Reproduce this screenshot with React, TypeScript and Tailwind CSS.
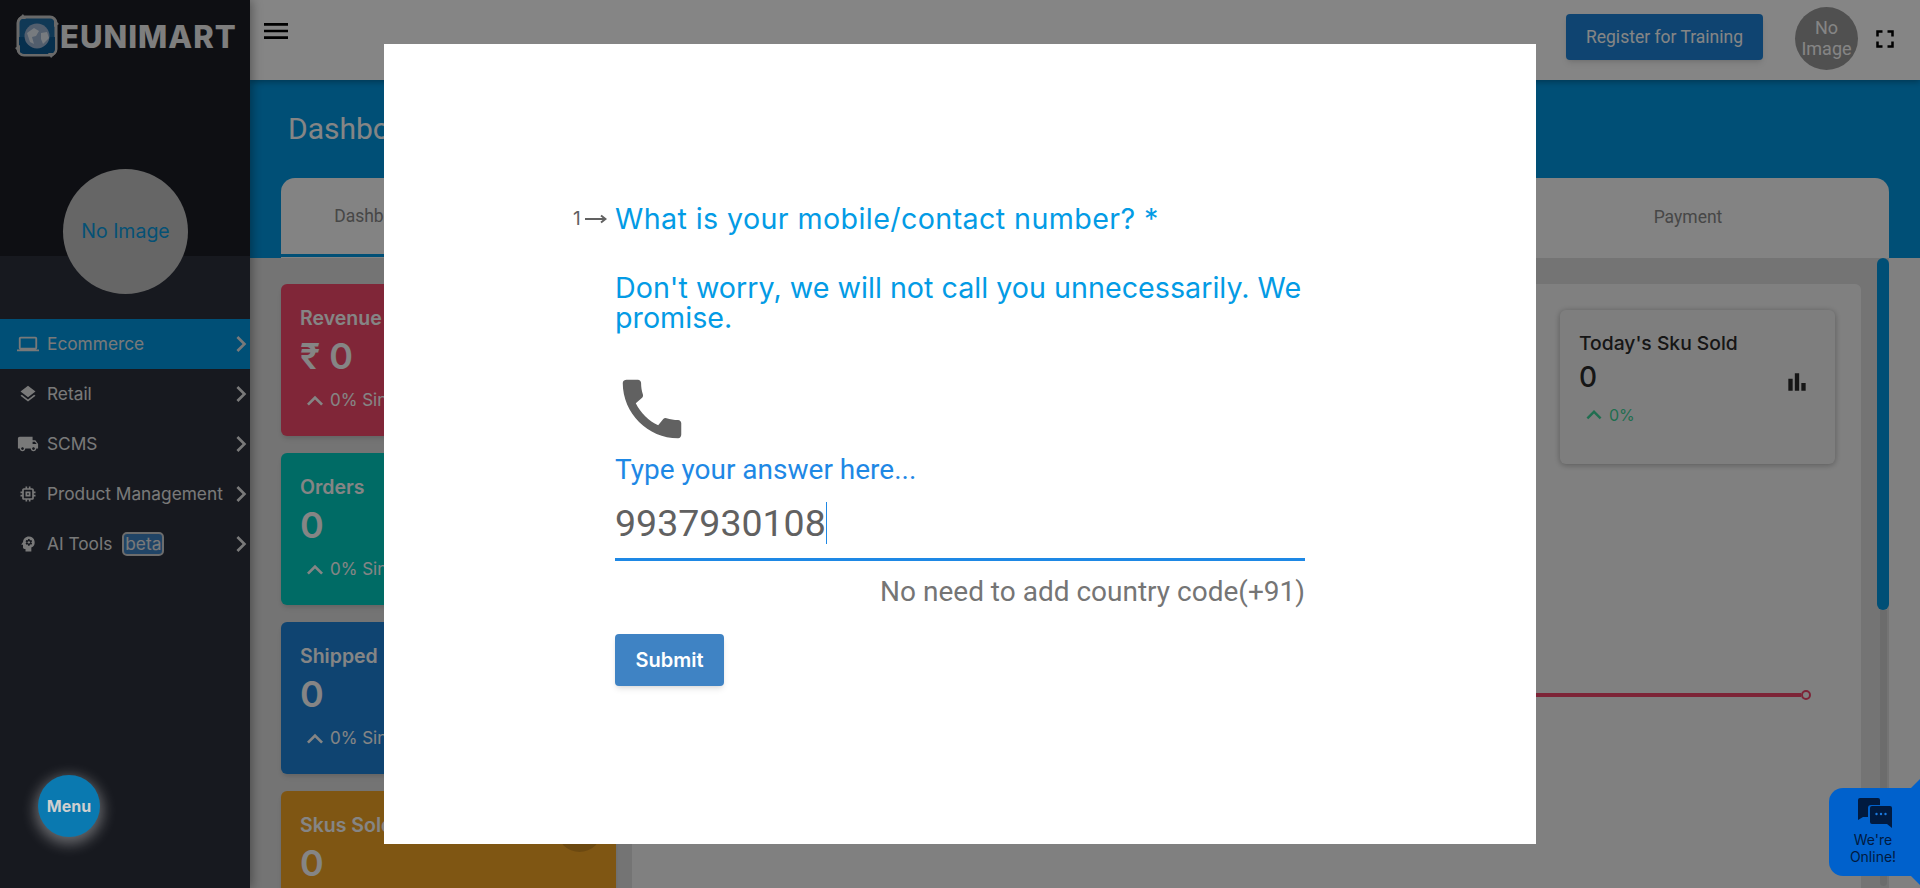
import type { ReactNode } from "react";
import {
  MdBarChart,
  MdCall,
  MdChevronRight,
  MdFullscreen,
  MdKeyboardArrowUp,
  MdLaptop,
  MdLayers,
  MdLocalShipping,
  MdMemory,
  MdMenu,
  MdPsychology,
} from "react-icons/md";

const rubik = "font-['Inter','Noto_Sans',sans-serif]";
const roboto = "font-['Roboto',sans-serif]";

const menuItems: { label: string; icon: ReactNode; active?: boolean; beta?: boolean }[] = [
  { label: "Ecommerce", icon: <MdLaptop size={22} />, active: true },
  { label: "Retail", icon: <MdLayers size={20} /> },
  { label: "SCMS", icon: <MdLocalShipping size={22} /> },
  { label: "Product Management", icon: <MdMemory size={20} /> },
  { label: "AI Tools", icon: <MdPsychology size={20} />, beta: true },
];

const statCards = [
  { title: "Revenue", value: "₹ 0", color: "bg-[#f64a6b]", trend: true },
  { title: "Orders", value: "0", color: "bg-[#00cdc1]", trend: true },
  { title: "Shipped", value: "0", color: "bg-[#1d83d8]", trend: true },
  { title: "Skus Sold", value: "0", color: "bg-[#f4a526]", trend: false },
];

const Logo = () => (
  <div className="flex items-center pl-[14px] pt-[13px]">
    <svg width="46" height="46" viewBox="0 0 46 46">
      <rect x="4" y="4" width="38" height="38" rx="6" fill="#1f6da6" stroke="#c9c9c9" strokeWidth="3" />
      <path d="M5 24h36v12a5 5 0 0 1-5 5H10a5 5 0 0 1-5-5z" fill="#0c5a94" />
      <circle cx="23" cy="23" r="12.5" fill="#9db4d2" />
      <path d="M13 20l7-5 5 3-3 5-4 1 2 7-4-2zM27 20l6-1 2 6-6 6-2-5z" fill="#e4ecf4" />
      <path d="M9 1l-5 5 8 0zM37 45l5-5-8 0zM45 11l-5-5 0 8zM1 35l5 5 0-8z" fill="#c9c9c9" />
    </svg>
    <span className="font-['Inter',sans-serif] text-[31px] leading-none font-extrabold tracking-[1px] text-[#f2f2f2]">
      EUNIMART
    </span>
  </div>
);

const Sidebar = () => (
  <aside className={`relative z-[2] flex w-[250px] shrink-0 flex-col bg-[#2c303c] shadow-[2px_0_10px_rgba(0,0,0,0.35)] ${rubik}`}>
    <div className="h-[256px] bg-[#1b1d25]">
      <Logo />
    </div>
    <div className="absolute top-[169px] left-[63px] flex h-[125px] w-[125px] items-center justify-center rounded-full bg-[#c4c4c4] text-[19.5px] text-[#0a9be0]">
      No Image
    </div>
    <nav className="mt-[63px] flex flex-col">
      {menuItems.map((item) => (
        <div
          key={item.label}
          className={`flex h-[50px] items-center text-[#e9e9e9] ${item.active ? "bg-[#0098e3]" : ""}`}
        >
          <span className="flex w-[47px] justify-center pl-[9px]">{item.icon}</span>
          <span className="text-[17.3px] whitespace-nowrap">{item.label}</span>
          {item.beta && (
            <span className="ml-[10px] rounded-[5px] border-2 border-[#cfcfcf] bg-[#3f83c4] px-[1px] text-[17.3px] leading-[20px]">
              beta
            </span>
          )}
          <MdChevronRight size={32} className="mr-[-7px] ml-auto shrink-0" />
        </div>
      ))}
    </nav>
  </aside>
);

const Header = () => (
  <header className={`relative z-[1] flex h-[80px] shrink-0 items-center bg-white shadow-[0_2px_6px_rgba(0,0,0,0.3)] ${roboto}`}>
    <MdMenu size={32} className="mt-[-18px] ml-[10px] text-black" />
    <button className="mt-[-6px] ml-auto h-[46px] w-[197px] rounded-[4px] bg-[#1d83d8] text-[17.5px] text-white shadow-md">
      Register for Training
    </button>
    <div className="mt-[-4px] ml-[32px] flex h-[63px] w-[63px] items-center justify-center rounded-full bg-[#9a9a9a] text-center text-[18px] leading-[21px] text-white">
      No
      <br />
      Image
    </div>
    <MdFullscreen size={30} className="mt-[-2px] mr-[20px] ml-[12px] text-black" />
  </header>
);

const StatCard = ({ title, value, color, trend }: { title: string; value: string; color: string; trend: boolean }) => (
  <div className={`relative h-[152px] shrink-0 rounded-[6px] px-[19px] pt-[22px] text-white shadow-md ${color} ${rubik}`}>
    <div className="text-[19.5px] leading-[24px] font-semibold whitespace-nowrap">{title}</div>
    <div className="mt-[4px] text-[36px] leading-[44px] font-semibold">{value}</div>
    {trend && (
      <div className="mt-[10px] flex h-[26px] items-center text-[17px] whitespace-nowrap">
        <MdKeyboardArrowUp size={32} className="mr-[-1px] ml-[-1px]" />
        0% Since last week
      </div>
    )}
    <span className="absolute top-[16px] right-[14px] h-[45px] w-[45px] rounded-full bg-black/15" />
  </div>
);

const QuestionForm = () => (
  <div className="flex w-[690px] flex-col pt-[157px]">
    <div className={`ml-[-44px] flex items-center text-[#039be5] ${rubik}`}>
      <span className="flex w-[44px] items-center text-[19px] text-[#616161]">
        <span className="ml-[2px]">1</span>
        <svg width="22" height="12" viewBox="0 0 22 12" className="ml-[4px] shrink-0">
          <path d="M0 6h20M16 2.5 20.5 6 16 9.5" fill="none" stroke="#616161" strokeWidth="2" />
        </svg>
      </span>
      <span className="text-[28.7px] leading-[36px] tracking-[0.38px]">What is your mobile/contact number? *</span>
    </div>
    <p className={`mt-[36px] text-[28.7px] leading-[30px] text-[#039be5] ${rubik}`}>
      Don't worry, we will not call you unnecessarily. We promise.
    </p>
    <MdCall size={78} className="mt-[37px] ml-[-2px] text-[#616161]" />
    <label className={`mt-[4px] text-[28px] leading-[36px] text-[#1e88e5] ${roboto}`}>
      Type your answer here...
    </label>
    <div className={`mt-[8px] flex h-[54px] items-center text-[37.5px] text-[#616161] ${roboto}`}>
      9937930108
      <span className="h-[42px] w-px bg-[#1e88e5]" />
    </div>
    <div className="mt-[8px] h-[3px] bg-[#1e88e5]" />
    <div className={`mt-[13px] text-right text-[28px] leading-[36px] text-[#757575] ${roboto}`}>
      No need to add country code(+91)
    </div>
    <button
      className={`mt-[24px] h-[52px] w-[109px] rounded-[4px] bg-[#3f83c4] text-[20px] font-semibold text-white shadow-md ${rubik}`}
    >
      Submit
    </button>
  </div>
);

const ChatWidget = () => (
  <div className="absolute top-[788px] right-0 z-30 flex h-[88px] w-[91px] flex-col items-center rounded-l-[14px] bg-[#0061cc] pt-[10px] pr-[3px] font-['Inter',sans-serif] text-[14px] leading-[17px] text-[#001a40]">
    <svg width="34" height="30" viewBox="0 0 34 30" className="ml-[3px] shrink-0">
      <path d="M2 0h18a2 2 0 0 1 2 2v5H13a3 3 0 0 0-3 3v9H5l-5 3V2a2 2 0 0 1 2-2z" fill="#001a40" />
      <path d="M14 8h18a2 2 0 0 1 2 2v20l-5-4H14a2 2 0 0 1-2-2V10a2 2 0 0 1 2-2z" fill="#001a40" />
      <circle cx="18.5" cy="16" r="1.2" fill="#1a7ae0" />
      <circle cx="23" cy="16" r="1.2" fill="#1a7ae0" />
      <circle cx="27.5" cy="16" r="1.2" fill="#1a7ae0" />
    </svg>
    <span className="mt-[3px] text-center">
      We're
      <br />
      Online!
    </span>
    <span className="absolute top-[-9px] right-0 h-0 w-0 border-b-[9px] border-l-[9px] border-b-[#0061cc] border-l-transparent" />
    <span className="absolute right-0 bottom-[-9px] h-0 w-0 border-t-[9px] border-l-[9px] border-t-[#0061cc] border-l-transparent" />
  </div>
);

export default function App() {
  return (
    <div className="relative flex h-[888px] w-[1920px] overflow-hidden bg-[#dfdfdf]">
      <Sidebar />
      <main className="flex min-w-0 flex-1 flex-col">
        <Header />
        <section className="h-[178px] shrink-0 bg-[#0098e3] pr-[31px] pl-[31px]">
          <h1 className={`h-[98px] pt-[27px] pl-[7px] text-[30px] leading-[44px] text-white ${roboto}`}>
            Dashboard
          </h1>
          <div className={`flex h-[80px] rounded-t-[14px] bg-[#fbfbfb] pb-[1px] text-[17.5px] text-[#888] ${roboto}`}>
            <div className="flex w-[191px] items-center justify-center border-b-[3px] border-[#0098e3]">
              Dashboard
            </div>
            <div className="flex-1 border-b-[3px] border-[#0098e3]" />
            <div className="flex w-[402px] items-center justify-center">Payment</div>
          </div>
        </section>
        <div className="flex min-h-0 flex-1">
          <div className="flex min-w-0 flex-1 pt-[26px] pl-[31px]">
            <div className="flex w-[335px] shrink-0 flex-col gap-[17px]">
              {statCards.map((card) => (
                <StatCard key={card.title} {...card} />
              ))}
            </div>
            <div className="ml-[16px] flex flex-1 flex-col rounded-tr-[6px] bg-[#f6f6f6] pt-[26px]">
              <div className={`mr-[26px] ml-auto h-[154px] w-[275px] rounded-[6px] bg-[#f2f2f2] px-[19px] pt-[20px] text-[#2b2b2b] shadow-[0_1px_6px_rgba(0,0,0,0.3)] ${rubik}`}>
                <div className="text-[19.3px] leading-[26px] font-medium whitespace-nowrap">Today's Sku Sold</div>
                <div className="flex items-center justify-between">
                  <span className="text-[28px] leading-[42px] font-medium">0</span>
                  <MdBarChart size={26} className="mt-[10px] mr-[6px]" />
                </div>
                <div className="mt-[4px] flex h-[26px] items-center text-[16px] text-[#3fd39a]">
                  <MdKeyboardArrowUp size={30} />
                  0%
                </div>
              </div>
              <div className="mt-[226px] mr-[50px] ml-[60px] flex items-center">
                <div className="h-[4px] flex-1 bg-[#f0456a]" />
                <div className="h-[10px] w-[10px] rounded-full border-2 border-[#f0456a]" />
              </div>
            </div>
          </div>
          <div className="ml-[16px] flex w-[12px] shrink-0 flex-col items-center">
            <div className="h-[352px] w-[12px] shrink-0 rounded-full bg-[#0098e3]" />
            <div className="mb-[2px] w-[7px] flex-1 rounded-b-full bg-[#d0d0d0]" />
          </div>
          <div className="w-[31px] shrink-0 bg-[#f6f6f6]" />
        </div>
      </main>

      <div className="absolute inset-0 z-10 flex items-center justify-center bg-black/[0.48]">
        <div className="flex h-[800px] w-[1152px] justify-center bg-white">
          <QuestionForm />
        </div>
      </div>
      <div className="absolute top-[775px] left-[38px] z-20 flex h-[62px] w-[62px] items-center justify-center rounded-full bg-[#0a79b0] font-['Inter',sans-serif] text-[16px] font-bold text-[#cfcfcf] shadow-[0_4px_14px_3px_rgba(255,255,255,0.35)]">
        Menu
      </div>
      <ChatWidget />
    </div>
  );
}
